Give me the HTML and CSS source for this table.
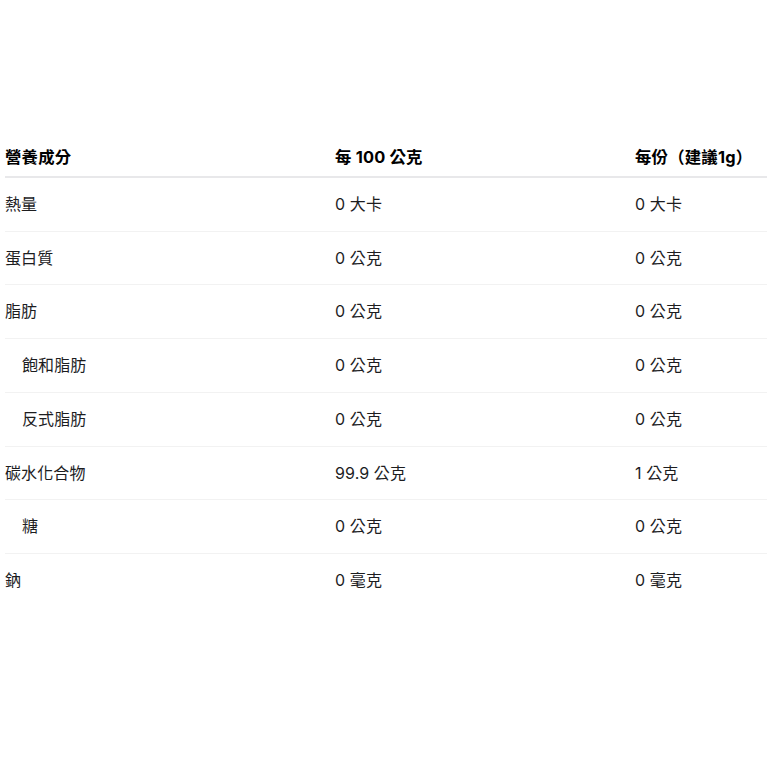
FILE: index.html
```html
<!DOCTYPE html>
<html lang="zh-Hant">
<head>
<meta charset="utf-8">
<link rel="stylesheet" href="styles.css">
</head>
<body>
<table class="nutrition">
  <colgroup>
    <col class="c1"><col class="c2"><col class="c3">
  </colgroup>
  <thead>
    <tr><th>營養成分</th><th>每 100 公克</th><th>每份（建議1g）</th></tr>
  </thead>
  <tbody>
    <tr><td>熱量</td><td>0 大卡</td><td>0 大卡</td></tr>
    <tr><td>蛋白質</td><td>0 公克</td><td>0 公克</td></tr>
    <tr><td>脂肪</td><td>0 公克</td><td>0 公克</td></tr>
    <tr><td class="sub">飽和脂肪</td><td>0 公克</td><td>0 公克</td></tr>
    <tr><td class="sub">反式脂肪</td><td>0 公克</td><td>0 公克</td></tr>
    <tr><td>碳水化合物</td><td>99.9 公克</td><td>1 公克</td></tr>
    <tr><td class="sub">糖</td><td>0 公克</td><td>0 公克</td></tr>
    <tr class="last"><td>鈉</td><td>0 毫克</td><td>0 毫克</td></tr>
  </tbody>
</table>
</body>
</html>
```
FILE: styles.css
```css
html, body {
  margin: 0;
  padding: 0;
  background: #ffffff;
}
body {
  font-family: Inter, "Noto Sans CJK TC", sans-serif;
  font-size: 16px;
  color: #1d1d1f;
}
.nutrition {
  margin: 133px 0 0 5px;
  width: 762px;
  border-collapse: collapse;
  table-layout: fixed;
}
.c1 { width: 330px; }
.c2 { width: 300px; }
.c3 { width: 132px; }
.nutrition th {
  text-align: left;
  font-weight: 700;
  font-size: 16.4px;
  letter-spacing: 0.2px;
  color: #000000;
  padding: 12px 0 7px 0;
  line-height: 24px;
  border-bottom: 2px solid #e8e8ea;
  white-space: nowrap;
}
.nutrition td {
  text-align: left;
  padding: 14px 0;
  line-height: 24.7px;
  border-bottom: 1px solid #f2f2f2;
  white-space: nowrap;
  letter-spacing: 0.1px;
}
.nutrition tr.last td {
  border-bottom: none;
}
.nutrition td.sub {
  padding-left: 17px;
}
```
